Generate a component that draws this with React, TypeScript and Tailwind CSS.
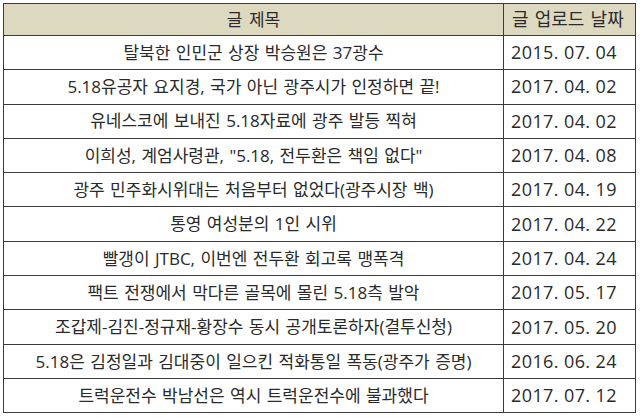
import React from "react";

type Post = {
    title: string;
    date: string;
};

const posts: Post[] = [
    { title: "탈북한 인민군 상장 박승원은 37광수", date: "2015. 07. 04" },
    { title: "5.18유공자 요지경, 국가 아닌 광주시가 인정하면 끝!", date: "2017. 04. 02" },
    { title: "유네스코에 보내진 5.18자료에 광주 발등 찍혀", date: "2017. 04. 02" },
    { title: "이희성, 계엄사령관, \"5.18, 전두환은 책임 없다\"", date: "2017. 04. 08" },
    { title: "광주 민주화시위대는 처음부터 없었다(광주시장 백)", date: "2017. 04. 19" },
    { title: "통영 여성분의 1인 시위", date: "2017. 04. 22" },
    { title: "빨갱이 JTBC, 이번엔 전두환 회고록 맹폭격", date: "2017. 04. 24" },
    { title: "팩트 전쟁에서 막다른 골목에 몰린 5.18측 발악", date: "2017. 05. 17" },
    { title: "조갑제-김진-정규재-황장수 동시 공개토론하자(결투신청)", date: "2017. 05. 20" },
    { title: "5.18은 김정일과 김대중이 일으킨 적화통일 폭동(광주가 증명)", date: "2016. 06. 24" },
    { title: "트럭운전수 박남선은 역시 트럭운전수에 불과했다", date: "2017. 07. 12" },
];

const App = () => {
    return (
        <div
            className="h-[417px] w-[640px] bg-white pl-[3px] pt-[3px] text-[#2a2a2a]"
            style={{ fontFamily: "'Open Sans', 'Noto Sans CJK KR', sans-serif" }}
        >
            <table className="w-[633px] table-fixed border-collapse text-[17px]">
                <colgroup>
                    <col className="w-[500px]" />
                    <col />
                </colgroup>
                <thead>
                    <tr className="h-[32px] bg-[#ddd8c0]">
                        <th className="border border-[#3a3a3a] text-center font-normal [word-spacing:2px]">
                            글 제목
                        </th>
                        <th className="whitespace-nowrap border border-[#3a3a3a] pl-[8px] text-left text-[18px] font-normal [word-spacing:1.5px]">
                            글 업로드 날짜
                        </th>
                    </tr>
                </thead>
                <tbody>
                    {posts.map((post, i) => (
                        <tr key={i} className="h-[34.3px]">
                            <td className="whitespace-nowrap border border-[#3a3a3a] text-center [word-spacing:1px]">
                                {post.title}
                            </td>
                            <td className="whitespace-nowrap border border-[#3a3a3a] pl-[7px] text-left text-[18px] tracking-[0.4px]">
                                {post.date}
                            </td>
                        </tr>
                    ))}
                </tbody>
            </table>
        </div>
    );
};

export default App;
